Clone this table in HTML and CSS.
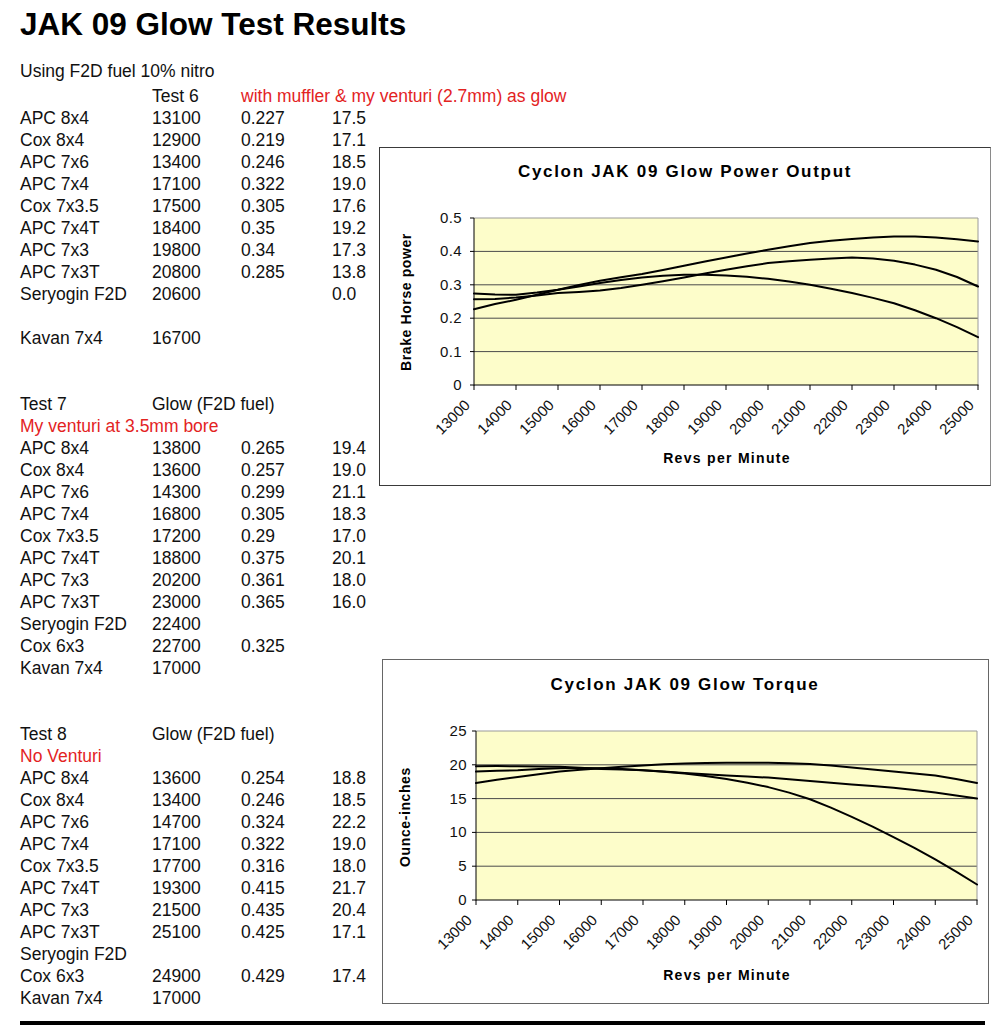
FILE: index.html
```html
<!DOCTYPE html>
<html lang="en">
<head>
<meta charset="utf-8">
<title>JAK 09 Glow Test Results</title>
<link rel="stylesheet" href="styles.css">
</head>
<body>
<div class="page">
  <h1 class="title">JAK 09 Glow Test Results</h1>
  <div class="main">
    <div class="data">
      <div class="row intro"><span class="span-all">Using F2D fuel 10% nitro</span></div>

      <section class="test">
        <div class="row"><span></span><span>Test 6</span><span class="red span-rest">with muffler &amp; my venturi (2.7mm) as glow</span></div>
        <div class="row"><span>APC 8x4</span><span>13100</span><span>0.227</span><span>17.5</span></div>
        <div class="row"><span>Cox 8x4</span><span>12900</span><span>0.219</span><span>17.1</span></div>
        <div class="row"><span>APC 7x6</span><span>13400</span><span>0.246</span><span>18.5</span></div>
        <div class="row"><span>APC 7x4</span><span>17100</span><span>0.322</span><span>19.0</span></div>
        <div class="row"><span>Cox 7x3.5</span><span>17500</span><span>0.305</span><span>17.6</span></div>
        <div class="row"><span>APC 7x4T</span><span>18400</span><span>0.35</span><span>19.2</span></div>
        <div class="row"><span>APC 7x3</span><span>19800</span><span>0.34</span><span>17.3</span></div>
        <div class="row"><span>APC 7x3T</span><span>20800</span><span>0.285</span><span>13.8</span></div>
        <div class="row"><span>Seryogin F2D</span><span>20600</span><span></span><span>0.0</span></div>
        <div class="row gap-before"><span>Kavan 7x4</span><span>16700</span><span></span><span></span></div>
      </section>

      <section class="test">
        <div class="row"><span>Test 7</span><span class="span-rest">Glow (F2D fuel)</span></div>
        <div class="row"><span class="red span-all">My venturi at 3.5mm bore</span></div>
        <div class="row"><span>APC 8x4</span><span>13800</span><span>0.265</span><span>19.4</span></div>
        <div class="row"><span>Cox 8x4</span><span>13600</span><span>0.257</span><span>19.0</span></div>
        <div class="row"><span>APC 7x6</span><span>14300</span><span>0.299</span><span>21.1</span></div>
        <div class="row"><span>APC 7x4</span><span>16800</span><span>0.305</span><span>18.3</span></div>
        <div class="row"><span>Cox 7x3.5</span><span>17200</span><span>0.29</span><span>17.0</span></div>
        <div class="row"><span>APC 7x4T</span><span>18800</span><span>0.375</span><span>20.1</span></div>
        <div class="row"><span>APC 7x3</span><span>20200</span><span>0.361</span><span>18.0</span></div>
        <div class="row"><span>APC 7x3T</span><span>23000</span><span>0.365</span><span>16.0</span></div>
        <div class="row"><span>Seryogin F2D</span><span>22400</span><span></span><span></span></div>
        <div class="row"><span>Cox 6x3</span><span>22700</span><span>0.325</span><span></span></div>
        <div class="row"><span>Kavan 7x4</span><span>17000</span><span></span><span></span></div>
      </section>

      <section class="test">
        <div class="row"><span>Test 8</span><span class="span-rest">Glow (F2D fuel)</span></div>
        <div class="row"><span class="red span-all">No Venturi</span></div>
        <div class="row"><span>APC 8x4</span><span>13600</span><span>0.254</span><span>18.8</span></div>
        <div class="row"><span>Cox 8x4</span><span>13400</span><span>0.246</span><span>18.5</span></div>
        <div class="row"><span>APC 7x6</span><span>14700</span><span>0.324</span><span>22.2</span></div>
        <div class="row"><span>APC 7x4</span><span>17100</span><span>0.322</span><span>19.0</span></div>
        <div class="row"><span>Cox 7x3.5</span><span>17700</span><span>0.316</span><span>18.0</span></div>
        <div class="row"><span>APC 7x4T</span><span>19300</span><span>0.415</span><span>21.7</span></div>
        <div class="row"><span>APC 7x3</span><span>21500</span><span>0.435</span><span>20.4</span></div>
        <div class="row"><span>APC 7x3T</span><span>25100</span><span>0.425</span><span>17.1</span></div>
        <div class="row"><span class="span-all">Seryogin F2D</span></div>
        <div class="row"><span>Cox 6x3</span><span>24900</span><span>0.429</span><span>17.4</span></div>
        <div class="row"><span>Kavan 7x4</span><span>17000</span><span></span><span></span></div>
      </section>
    </div>

    <div class="charts">
      <div class="chart chart-power">
        <svg class="chart-svg" width="610" height="337" viewBox="0 0 610 337">
          <text class="chart-title" x="305" y="29" text-anchor="middle">Cyclon JAK 09 Glow Power Output</text>
          <rect class="plot-bg" x="94" y="70" width="504" height="167"/>
          <g class="grid">
            <line x1="94" y1="103.4" x2="598" y2="103.4"/>
            <line x1="94" y1="136.8" x2="598" y2="136.8"/>
            <line x1="94" y1="170.2" x2="598" y2="170.2"/>
            <line x1="94" y1="203.6" x2="598" y2="203.6"/>
          </g>
          <g class="plot-edge">
            <line x1="94" y1="70" x2="598" y2="70"/>
            <line x1="598" y1="70" x2="598" y2="237"/>
          </g>
          <g class="axis">
            <line x1="94" y1="70" x2="94" y2="237.5"/>
            <line x1="94" y1="237" x2="598.5" y2="237"/>
            <line x1="90" y1="70" x2="94" y2="70"/>
            <line x1="90" y1="103.4" x2="94" y2="103.4"/>
            <line x1="90" y1="136.8" x2="94" y2="136.8"/>
            <line x1="90" y1="170.2" x2="94" y2="170.2"/>
            <line x1="90" y1="203.6" x2="94" y2="203.6"/>
            <line x1="90" y1="237" x2="94" y2="237"/>
            <line x1="94" y1="237" x2="94" y2="242"/>
            <line x1="136" y1="237" x2="136" y2="242"/>
            <line x1="178" y1="237" x2="178" y2="242"/>
            <line x1="220" y1="237" x2="220" y2="242"/>
            <line x1="262" y1="237" x2="262" y2="242"/>
            <line x1="304" y1="237" x2="304" y2="242"/>
            <line x1="346" y1="237" x2="346" y2="242"/>
            <line x1="388" y1="237" x2="388" y2="242"/>
            <line x1="430" y1="237" x2="430" y2="242"/>
            <line x1="472" y1="237" x2="472" y2="242"/>
            <line x1="514" y1="237" x2="514" y2="242"/>
            <line x1="556" y1="237" x2="556" y2="242"/>
            <line x1="598" y1="237" x2="598" y2="242"/>
          </g>
          <g class="series">
            <polyline points="94,161.2 115,156 136,151.8 157,146.8 178,141.8 199,137 220,132.8 241,129.3 262,126.1 283,122 304,117.8 325,113.5 346,109.4 367,105.4 388,101.7 409,98.2 430,95 451,92.8 472,91 493,89.6 514,88.4 535,88.6 556,89.4 577,91.2 598,93.4"/>
            <polyline points="94,151.2 115,151 136,149.5 157,147.5 178,145.1 199,143.9 220,142.5 241,139.9 262,136.8 283,133.3 304,129.5 325,125.5 346,121.8 367,118.2 388,115.1 409,113.2 430,111.7 451,110.4 472,109.4 493,110.5 514,112.8 535,116.6 556,121.8 577,129 598,138.5"/>
            <polyline points="94,145.5 115,146.5 136,146.8 157,144.6 178,141.8 199,138.5 220,135.1 241,132.1 262,129.5 283,127.8 304,126.8 325,126.8 346,127.4 367,128.8 388,130.8 409,133.5 430,136.8 451,140.7 472,145.1 493,149.9 514,155.2 535,162.2 556,170.2 577,179.2 598,189.2"/>
          </g>
          <g class="y-labels">
            <text x="82" y="242">0</text>
            <text x="82" y="208.6">0.1</text>
            <text x="82" y="175.2">0.2</text>
            <text x="82" y="141.8">0.3</text>
            <text x="82" y="108.4">0.4</text>
            <text x="82" y="75">0.5</text>
          </g>
          <g class="x-labels">
            <text transform="translate(91,258) rotate(-45)">13000</text>
            <text transform="translate(133,258) rotate(-45)">14000</text>
            <text transform="translate(175,258) rotate(-45)">15000</text>
            <text transform="translate(217,258) rotate(-45)">16000</text>
            <text transform="translate(259,258) rotate(-45)">17000</text>
            <text transform="translate(301,258) rotate(-45)">18000</text>
            <text transform="translate(343,258) rotate(-45)">19000</text>
            <text transform="translate(385,258) rotate(-45)">20000</text>
            <text transform="translate(427,258) rotate(-45)">21000</text>
            <text transform="translate(469,258) rotate(-45)">22000</text>
            <text transform="translate(511,258) rotate(-45)">23000</text>
            <text transform="translate(553,258) rotate(-45)">24000</text>
            <text transform="translate(595,258) rotate(-45)">25000</text>
          </g>
          <text class="axis-title vertical" transform="translate(31,154) rotate(-90)" text-anchor="middle">Brake Horse power</text>
          <text class="axis-title" x="347" y="315" text-anchor="middle">Revs per Minute</text>
        </svg>
      </div>

      <div class="chart chart-torque">
        <svg class="chart-svg" width="605" height="343" viewBox="0 0 605 343">
          <text class="chart-title" x="302" y="30" text-anchor="middle">Cyclon JAK 09 Glow Torque</text>
          <rect class="plot-bg" x="93" y="71" width="501" height="169"/>
          <g class="grid">
            <line x1="93" y1="104.8" x2="594" y2="104.8"/>
            <line x1="93" y1="138.6" x2="594" y2="138.6"/>
            <line x1="93" y1="172.4" x2="594" y2="172.4"/>
            <line x1="93" y1="206.2" x2="594" y2="206.2"/>
          </g>
          <g class="plot-edge">
            <line x1="93" y1="71" x2="594" y2="71"/>
            <line x1="594" y1="71" x2="594" y2="240"/>
          </g>
          <g class="axis">
            <line x1="93" y1="71" x2="93" y2="240.5"/>
            <line x1="93" y1="240" x2="594.5" y2="240"/>
            <line x1="89" y1="71" x2="93" y2="71"/>
            <line x1="89" y1="104.8" x2="93" y2="104.8"/>
            <line x1="89" y1="138.6" x2="93" y2="138.6"/>
            <line x1="89" y1="172.4" x2="93" y2="172.4"/>
            <line x1="89" y1="206.2" x2="93" y2="206.2"/>
            <line x1="89" y1="240" x2="93" y2="240"/>
            <line x1="93" y1="240" x2="93" y2="245"/>
            <line x1="134.75" y1="240" x2="134.75" y2="245"/>
            <line x1="176.5" y1="240" x2="176.5" y2="245"/>
            <line x1="218.25" y1="240" x2="218.25" y2="245"/>
            <line x1="260" y1="240" x2="260" y2="245"/>
            <line x1="301.75" y1="240" x2="301.75" y2="245"/>
            <line x1="343.5" y1="240" x2="343.5" y2="245"/>
            <line x1="385.25" y1="240" x2="385.25" y2="245"/>
            <line x1="427" y1="240" x2="427" y2="245"/>
            <line x1="468.75" y1="240" x2="468.75" y2="245"/>
            <line x1="510.5" y1="240" x2="510.5" y2="245"/>
            <line x1="552.25" y1="240" x2="552.25" y2="245"/>
            <line x1="594" y1="240" x2="594" y2="245"/>
          </g>
          <g class="series">
            <polyline points="93,123.1 113.9,119.8 134.75,117 155.6,114.2 176.5,111.6 197.4,109.8 218.25,108.2 239.1,106.7 260,105.5 280.9,104.3 301.75,103.4 322.6,102.9 343.5,102.8 364.4,102.7 385.25,102.8 406.1,103.3 427,104.1 447.9,105.6 468.75,107.5 489.6,109.5 510.5,111.6 531.4,113.5 552.25,115.6 573.1,119 594,123.1"/>
            <polyline points="93,111.6 113.9,110.8 134.75,110.2 155.6,109.1 176.5,108.2 197.4,108 218.25,108.2 239.1,109 260,110.2 280.9,111.5 301.75,112.9 322.6,114.3 343.5,115.6 364.4,116.6 385.25,117.6 406.1,119.2 427,121 447.9,122.7 468.75,124.4 489.6,126.1 510.5,127.8 531.4,130 552.25,132.5 573.1,135.4 594,138.6"/>
            <polyline points="93,106.2 113.9,106.1 134.75,106.2 155.6,106.4 176.5,106.8 197.4,107.7 218.25,108.9 239.1,109.5 260,110.2 280.9,111.7 301.75,113.6 322.6,116 343.5,119 364.4,122.8 385.25,127.1 406.1,132.6 427,139.3 447.9,147.6 468.75,156.9 489.6,166.6 510.5,177.1 531.4,187.9 552.25,199.4 573.1,211.6 594,224.5"/>
          </g>
          <g class="y-labels">
            <text x="84" y="245">0</text>
            <text x="84" y="211.2">5</text>
            <text x="84" y="177.4">10</text>
            <text x="84" y="143.6">15</text>
            <text x="84" y="109.8">20</text>
            <text x="84" y="76">25</text>
          </g>
          <g class="x-labels">
            <text transform="translate(90,261) rotate(-45)">13000</text>
            <text transform="translate(131.75,261) rotate(-45)">14000</text>
            <text transform="translate(173.5,261) rotate(-45)">15000</text>
            <text transform="translate(215.25,261) rotate(-45)">16000</text>
            <text transform="translate(257,261) rotate(-45)">17000</text>
            <text transform="translate(298.75,261) rotate(-45)">18000</text>
            <text transform="translate(340.5,261) rotate(-45)">19000</text>
            <text transform="translate(382.25,261) rotate(-45)">20000</text>
            <text transform="translate(424,261) rotate(-45)">21000</text>
            <text transform="translate(465.75,261) rotate(-45)">22000</text>
            <text transform="translate(507.5,261) rotate(-45)">23000</text>
            <text transform="translate(549.25,261) rotate(-45)">24000</text>
            <text transform="translate(591,261) rotate(-45)">25000</text>
          </g>
          <text class="axis-title vertical" transform="translate(27,157) rotate(-90)" text-anchor="middle">Ounce-inches</text>
          <text class="axis-title" x="344" y="320" text-anchor="middle">Revs per Minute</text>
        </svg>
      </div>
    </div>
  </div>
  <div class="rule"></div>
</div>
</body>
</html>
```

FILE: styles.css
```css
html, body {
  margin: 0;
  padding: 0;
  background: #ffffff;
}

body {
  font-family: "Liberation Sans", Arial, Helvetica, sans-serif;
  color: #111111;
}

.page {
  width: 1000px;
  padding: 6px 0 0 20px;
  box-sizing: border-box;
}

.title {
  margin: 0 0 18px 0;
  height: 36px;
  font-size: 31.5px;
  line-height: 36px;
  font-weight: bold;
  color: #000000;
}

.main {
  display: flex;
  align-items: flex-start;
}

.data {
  width: 359px;
  flex: none;
  font-size: 17.5px;
}

.row {
  display: grid;
  grid-template-columns: 132px 89px 91px 40px;
  height: 22px;
  line-height: 22px;
  white-space: nowrap;
}

.row.intro {
  margin-bottom: 3px;
}

.row.gap-before {
  margin-top: 22px;
}

.span-all {
  grid-column: 1 / -1;
}

.span-rest {
  grid-column: 2 / -1;
}

.row .red.span-rest {
  grid-column: 3 / -1;
}

.red {
  color: #e3231f;
}

.test + .test {
  margin-top: 44px;
}

.charts {
  display: flex;
  flex-direction: column;
  align-items: flex-start;
}

.chart {
  border: 1px solid #3a3a3a;
  background: #ffffff;
}

.chart-power {
  margin-top: 87px;
  width: 610px;
  height: 337px;
  border-right-color: #8a8a8a;
}

.chart-torque {
  margin-top: 173px;
  margin-left: 3px;
  width: 605px;
  height: 343px;
  border-color: #666666;
}

.chart-svg {
  display: block;
}

.chart-title {
  font-family: "Liberation Sans", Arial, sans-serif;
  font-size: 17px;
  font-weight: bold;
  letter-spacing: 1.7px;
  fill: #000000;
}

.axis-title {
  font-family: "Liberation Sans", Arial, sans-serif;
  font-size: 14px;
  font-weight: bold;
  letter-spacing: 1.3px;
  fill: #000000;
}

.axis-title.vertical {
  letter-spacing: 0.6px;
}

.y-labels text {
  font-family: "Liberation Sans", Arial, sans-serif;
  font-size: 15px;
  letter-spacing: 0.4px;
  text-anchor: end;
  fill: #111111;
}

.x-labels text {
  font-family: "Liberation Sans", Arial, sans-serif;
  font-size: 15px;
  letter-spacing: 0;
  text-anchor: end;
  fill: #111111;
}

.plot-bg {
  fill: #fdfdca;
}

.grid line {
  stroke: #4a4a4a;
  stroke-width: 1;
}

.plot-edge line {
  stroke: #9a9a9a;
  stroke-width: 1;
}

.axis line {
  stroke: #000000;
  stroke-width: 1;
}

.series polyline {
  fill: none;
  stroke: #000000;
  stroke-width: 2;
  stroke-linejoin: round;
  stroke-linecap: round;
}

.rule {
  margin-top: 12px;
  width: 965px;
  height: 4px;
  background: #000000;
}
```
